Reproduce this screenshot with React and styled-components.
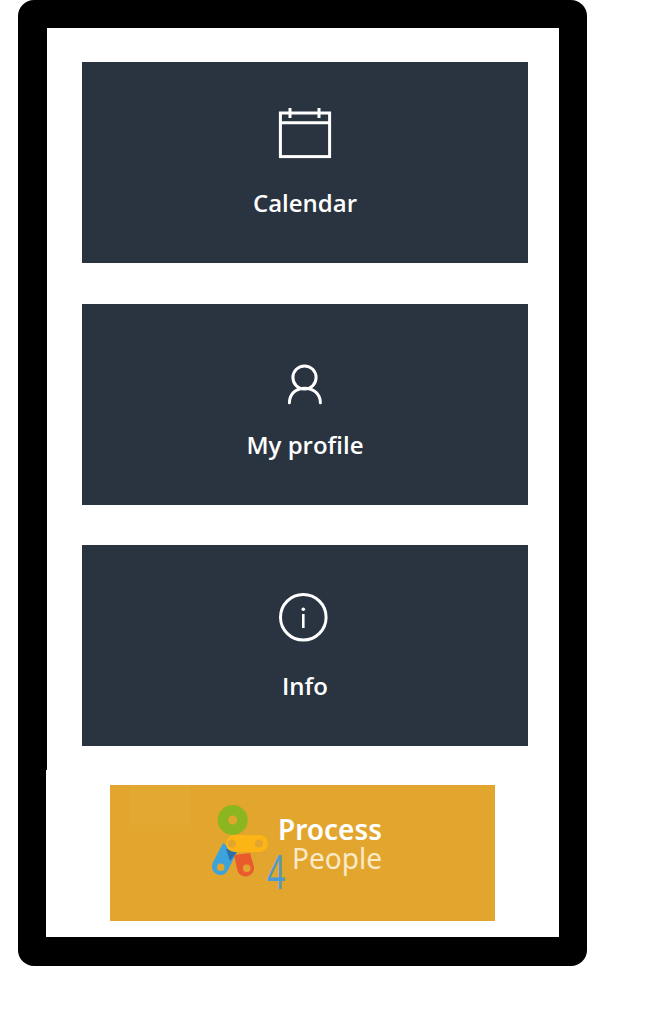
import React from "react";
import styled, { createGlobalStyle } from "styled-components";

const Global = createGlobalStyle`
  html, body { margin: 0; padding: 0; background: #fff; }
  body { font-family: "Open Sans", "Liberation Sans", sans-serif; }
`;

const Frame = styled.div`
  width: 569px;
  height: 966px;
  margin-left: 18px;
  padding: 28px 28px 29px 28px;
  box-sizing: border-box;
  background: #000;
  border-radius: 16px;
`;

const Screen = styled.main`
  position: relative;
  height: 909px;
  box-sizing: border-box;
  padding: 34px 31px 0 36px;
  background: #fff;
  &::before {
    content: "";
    position: absolute;
    left: 0;
    top: 0;
    width: 1px;
    height: 742px;
    background: #000;
  }
`;

const Menu = styled.nav`
  display: flex;
  flex-direction: column;
  gap: 40.5px;
`;

const Tile = styled.a`
  display: flex;
  flex-direction: column;
  align-items: center;
  height: 201px;
  padding-top: 44px;
  box-sizing: border-box;
  background: #293440;
  color: #fff;
`;

const IconBox = styled.svg`
  width: 56px;
  height: 56px;
  fill: none;
  stroke: #fff;
  stroke-width: 3;
  overflow: visible;
`;

const Label = styled.span`
  margin-top: 24px;
  font-size: 24px;
  line-height: 33px;
  font-weight: 600;
`;

const Banner = styled.svg`
  display: block;
  width: 385px;
  height: 136px;
  margin: 39px 0 0 28px;
  background: #e2a62f;
`;

const BrandStrong = styled.text`
  font-family: "Noto Sans", "Open Sans", sans-serif;
  font-size: 29px;
  font-weight: 600;
  fill: #fff;
`;

const BrandLight = styled.text`
  font-family: "Noto Sans", "Open Sans", sans-serif;
  font-size: 29px;
  font-weight: 400;
  fill: #fbe9c8;
`;

const BrandDigit = styled.text`
  font-family: "Open Sans", sans-serif;
  font-size: 47px;
  font-weight: 400;
  fill: #4a9bd4;
`;

const CalendarIcon = () => (
  <IconBox viewBox="0 0 56 56">
    <rect x="3.4" y="7" width="49.2" height="43.6" />
    <path d="M3.4 16.7H52.6M13 2V12M42 2V12" />
  </IconBox>
);

const PersonIcon = () => (
  <IconBox viewBox="0 0 56 56">
    <circle cx="27.5" cy="29.5" r="11.6" />
    <path d="M12.4 54.8C12.4 46 19 40.2 27.7 40.2S43.4 46 43.4 54.8" strokeLinecap="round" />
  </IconBox>
);

const InfoIcon = () => (
  <IconBox viewBox="0 0 56 56">
    <circle cx="26.3" cy="28.3" r="22.8" />
    <path d="M26.3 25V39" strokeWidth="2.6" />
    <circle cx="26.3" cy="20.3" r="1.8" fill="#fff" stroke="none" />
  </IconBox>
);

const items = [
  { label: "Calendar", Icon: CalendarIcon },
  { label: "My profile", Icon: PersonIcon },
  { label: "Info", Icon: InfoIcon },
];

const Logo = () => (
  <Banner viewBox="0 0 385 136">
    <rect x="20" y="0" width="60" height="40" fill="#e3a831" />
    <circle cx="122.7" cy="35" r="9.75" fill="none" stroke="#8ab71f" strokeWidth="10.5" />
    <path d="M113 58 L127 67 L118 85 A8.2 8.2 0 1 1 102.6 78 Z" fill="#3da3dc" />
    <path d="M124 70 L140 68 L143.5 80 A8 8 0 1 1 127.5 86 Z" fill="#ea5b2c" />
    <path d="M116 64 L129 64 L120 76 Z" fill="#2c6ea8" />
    <circle cx="110.7" cy="82.3" r="3.8" fill="#e2a62f" />
    <circle cx="136.7" cy="83.3" r="3.8" fill="#e2a62f" />
    <rect x="116" y="50" width="42" height="17" rx="8.5" fill="#fdb515" />
    <circle cx="122" cy="58.5" r="4" fill="#e2a62f" />
    <circle cx="149" cy="58.5" r="4" fill="#e2a62f" />
    <BrandStrong x="168" y="55" textLength="104" lengthAdjust="spacingAndGlyphs">Process</BrandStrong>
    <BrandLight x="182" y="84" textLength="90" lengthAdjust="spacingAndGlyphs">People</BrandLight>
    <BrandDigit transform="translate(157 104) scale(0.68 1)">4</BrandDigit>
  </Banner>
);

export default function App() {
  return (
    <>
      <Global />
      <Frame>
        <Screen>
          <Menu>
            {items.map(({ label, Icon }) => (
              <Tile key={label}>
                <Icon />
                <Label>{label}</Label>
              </Tile>
            ))}
          </Menu>
          <Logo />
        </Screen>
      </Frame>
    </>
  );
}
